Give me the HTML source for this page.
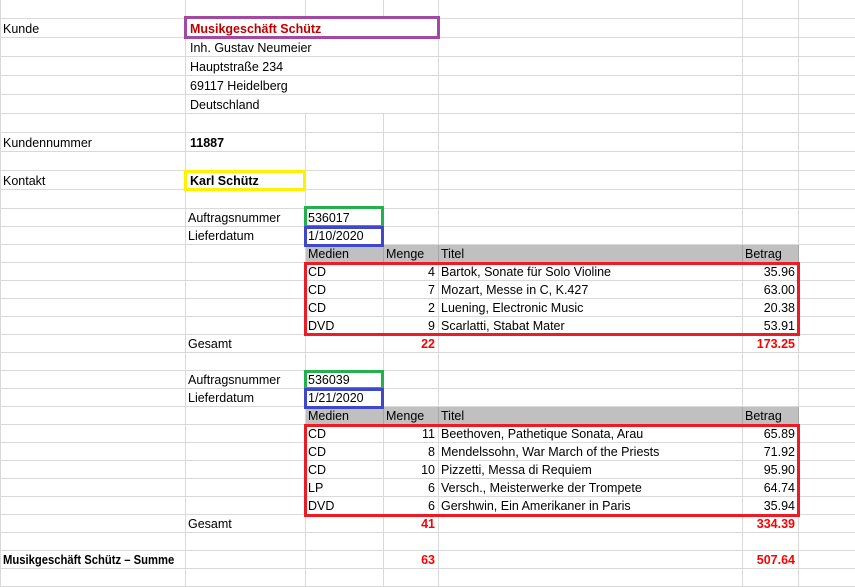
<!DOCTYPE html>
<html><head><meta charset="utf-8"><style>
*{margin:0;padding:0;box-sizing:border-box}
body{width:855px;height:570px;overflow:hidden;background:#fff;font-family:"Liberation Sans",sans-serif;font-size:12.5px;color:#000;position:relative}
table{border-collapse:collapse;table-layout:fixed;position:absolute;left:0;top:-1px;width:856px}
td{border:1px solid #d9d9d9;padding:0 3px 0 2px;white-space:nowrap;overflow:hidden;line-height:16px;vertical-align:bottom}
tr.a td{height:19px}
tr.b td{height:18px}
.r{text-align:right}
.bd{font-weight:bold}
.red{color:#ff0000;font-weight:bold}
.h td.g{background:#c0c0c0;border-color:#a6a6a6}
.box{position:absolute;border:3px solid}
.sq{display:inline-block;transform:scaleX(0.9);transform-origin:left}
</style></head><body>
<table>
<colgroup><col style="width:185px"><col style="width:120px"><col style="width:78px"><col style="width:55px"><col style="width:304px"><col style="width:56px"><col style="width:58px"></colgroup>
<tr class="b" style="height:19px"><td></td><td></td><td></td><td></td><td></td><td></td><td></td></tr>
<tr class="a"><td>Kunde</td><td colspan="3" class="bd" style="color:#c00000;padding-left:4px">Musikgeschäft Schütz</td><td></td><td></td><td></td></tr>
<tr class="a"><td></td><td colspan="3" style="padding-left:4px">Inh. Gustav Neumeier</td><td></td><td></td><td></td></tr>
<tr class="a"><td></td><td colspan="3" style="padding-left:4px">Hauptstraße 234</td><td></td><td></td><td></td></tr>
<tr class="a"><td></td><td colspan="3" style="padding-left:4px">69117 Heidelberg</td><td></td><td></td><td></td></tr>
<tr class="a"><td></td><td colspan="3" style="padding-left:4px">Deutschland</td><td></td><td></td><td></td></tr>
<tr class="a"><td></td><td></td><td></td><td></td><td></td><td></td><td></td></tr>
<tr class="a"><td>Kundennummer</td><td class="bd" style="padding-left:4px">11887</td><td></td><td></td><td></td><td></td><td></td></tr>
<tr class="a"><td></td><td></td><td></td><td></td><td></td><td></td><td></td></tr>
<tr class="a"><td>Kontakt</td><td class="bd" style="padding-left:4px">Karl Schütz</td><td></td><td></td><td></td><td></td><td></td></tr>
<tr class="a"><td></td><td></td><td></td><td></td><td></td><td></td><td></td></tr>
<tr class="b"><td></td><td>Auftragsnummer</td><td>536017</td><td></td><td></td><td></td><td></td></tr>
<tr class="b"><td></td><td>Lieferdatum</td><td>1/10/2020</td><td></td><td></td><td></td><td></td></tr>
<tr class="b h"><td></td><td></td><td class="g">Medien</td><td class="g">Menge</td><td class="g">Titel</td><td class="g">Betrag</td><td></td></tr>
<tr class="b"><td></td><td></td><td>CD</td><td class="r">4</td><td>Bartok, Sonate für Solo Violine</td><td class="r">35.96</td><td></td></tr>
<tr class="b"><td></td><td></td><td>CD</td><td class="r">7</td><td>Mozart, Messe in C, K.427</td><td class="r">63.00</td><td></td></tr>
<tr class="b"><td></td><td></td><td>CD</td><td class="r">2</td><td>Luening, Electronic Music</td><td class="r">20.38</td><td></td></tr>
<tr class="b"><td></td><td></td><td>DVD</td><td class="r">9</td><td>Scarlatti, Stabat Mater</td><td class="r">53.91</td><td></td></tr>
<tr class="b"><td></td><td>Gesamt</td><td></td><td class="r red">22</td><td></td><td class="r red">173.25</td><td></td></tr>
<tr class="b"><td></td><td></td><td></td><td></td><td></td><td></td><td></td></tr>
<tr class="b"><td></td><td>Auftragsnummer</td><td>536039</td><td></td><td></td><td></td><td></td></tr>
<tr class="b"><td></td><td>Lieferdatum</td><td>1/21/2020</td><td></td><td></td><td></td><td></td></tr>
<tr class="b h"><td></td><td></td><td class="g">Medien</td><td class="g">Menge</td><td class="g">Titel</td><td class="g">Betrag</td><td></td></tr>
<tr class="b"><td></td><td></td><td>CD</td><td class="r">11</td><td>Beethoven, Pathetique Sonata, Arau</td><td class="r">65.89</td><td></td></tr>
<tr class="b"><td></td><td></td><td>CD</td><td class="r">8</td><td>Mendelssohn, War March of the Priests</td><td class="r">71.92</td><td></td></tr>
<tr class="b"><td></td><td></td><td>CD</td><td class="r">10</td><td>Pizzetti, Messa di Requiem</td><td class="r">95.90</td><td></td></tr>
<tr class="b"><td></td><td></td><td>LP</td><td class="r">6</td><td>Versch., Meisterwerke der Trompete</td><td class="r">64.74</td><td></td></tr>
<tr class="b"><td></td><td></td><td>DVD</td><td class="r">6</td><td>Gershwin, Ein Amerikaner in Paris</td><td class="r">35.94</td><td></td></tr>
<tr class="b"><td></td><td>Gesamt</td><td></td><td class="r red">41</td><td></td><td class="r red">334.39</td><td></td></tr>
<tr class="b"><td></td><td></td><td></td><td></td><td></td><td></td><td></td></tr>
<tr class="b"><td class="bd"><span class="sq">Musikgeschäft Schütz – Summe</span></td><td></td><td></td><td class="r red">63</td><td></td><td class="r red">507.64</td><td></td></tr>
<tr class="b"><td></td><td></td><td></td><td></td><td></td><td></td><td></td></tr>
</table>
<div class="box" style="left:184px;top:16px;width:256px;height:23px;border-color:#a349a4"></div>
<div class="box" style="left:184px;top:170px;width:122px;height:21px;border-color:#fff200"></div>
<div class="box" style="left:304px;top:206px;width:80px;height:22px;border-color:#22b14c"></div>
<div class="box" style="left:304px;top:226px;width:80px;height:21px;border-color:#3f48cc"></div>
<div class="box" style="left:304px;top:262px;width:496px;height:74px;border-color:#ed1c24"></div>
<div class="box" style="left:304px;top:424px;width:496px;height:93px;border-color:#ed1c24"></div>
<div class="box" style="left:304px;top:370px;width:80px;height:20px;border-color:#22b14c"></div>
<div class="box" style="left:304px;top:388px;width:80px;height:21px;border-color:#3f48cc"></div>
</body></html>
